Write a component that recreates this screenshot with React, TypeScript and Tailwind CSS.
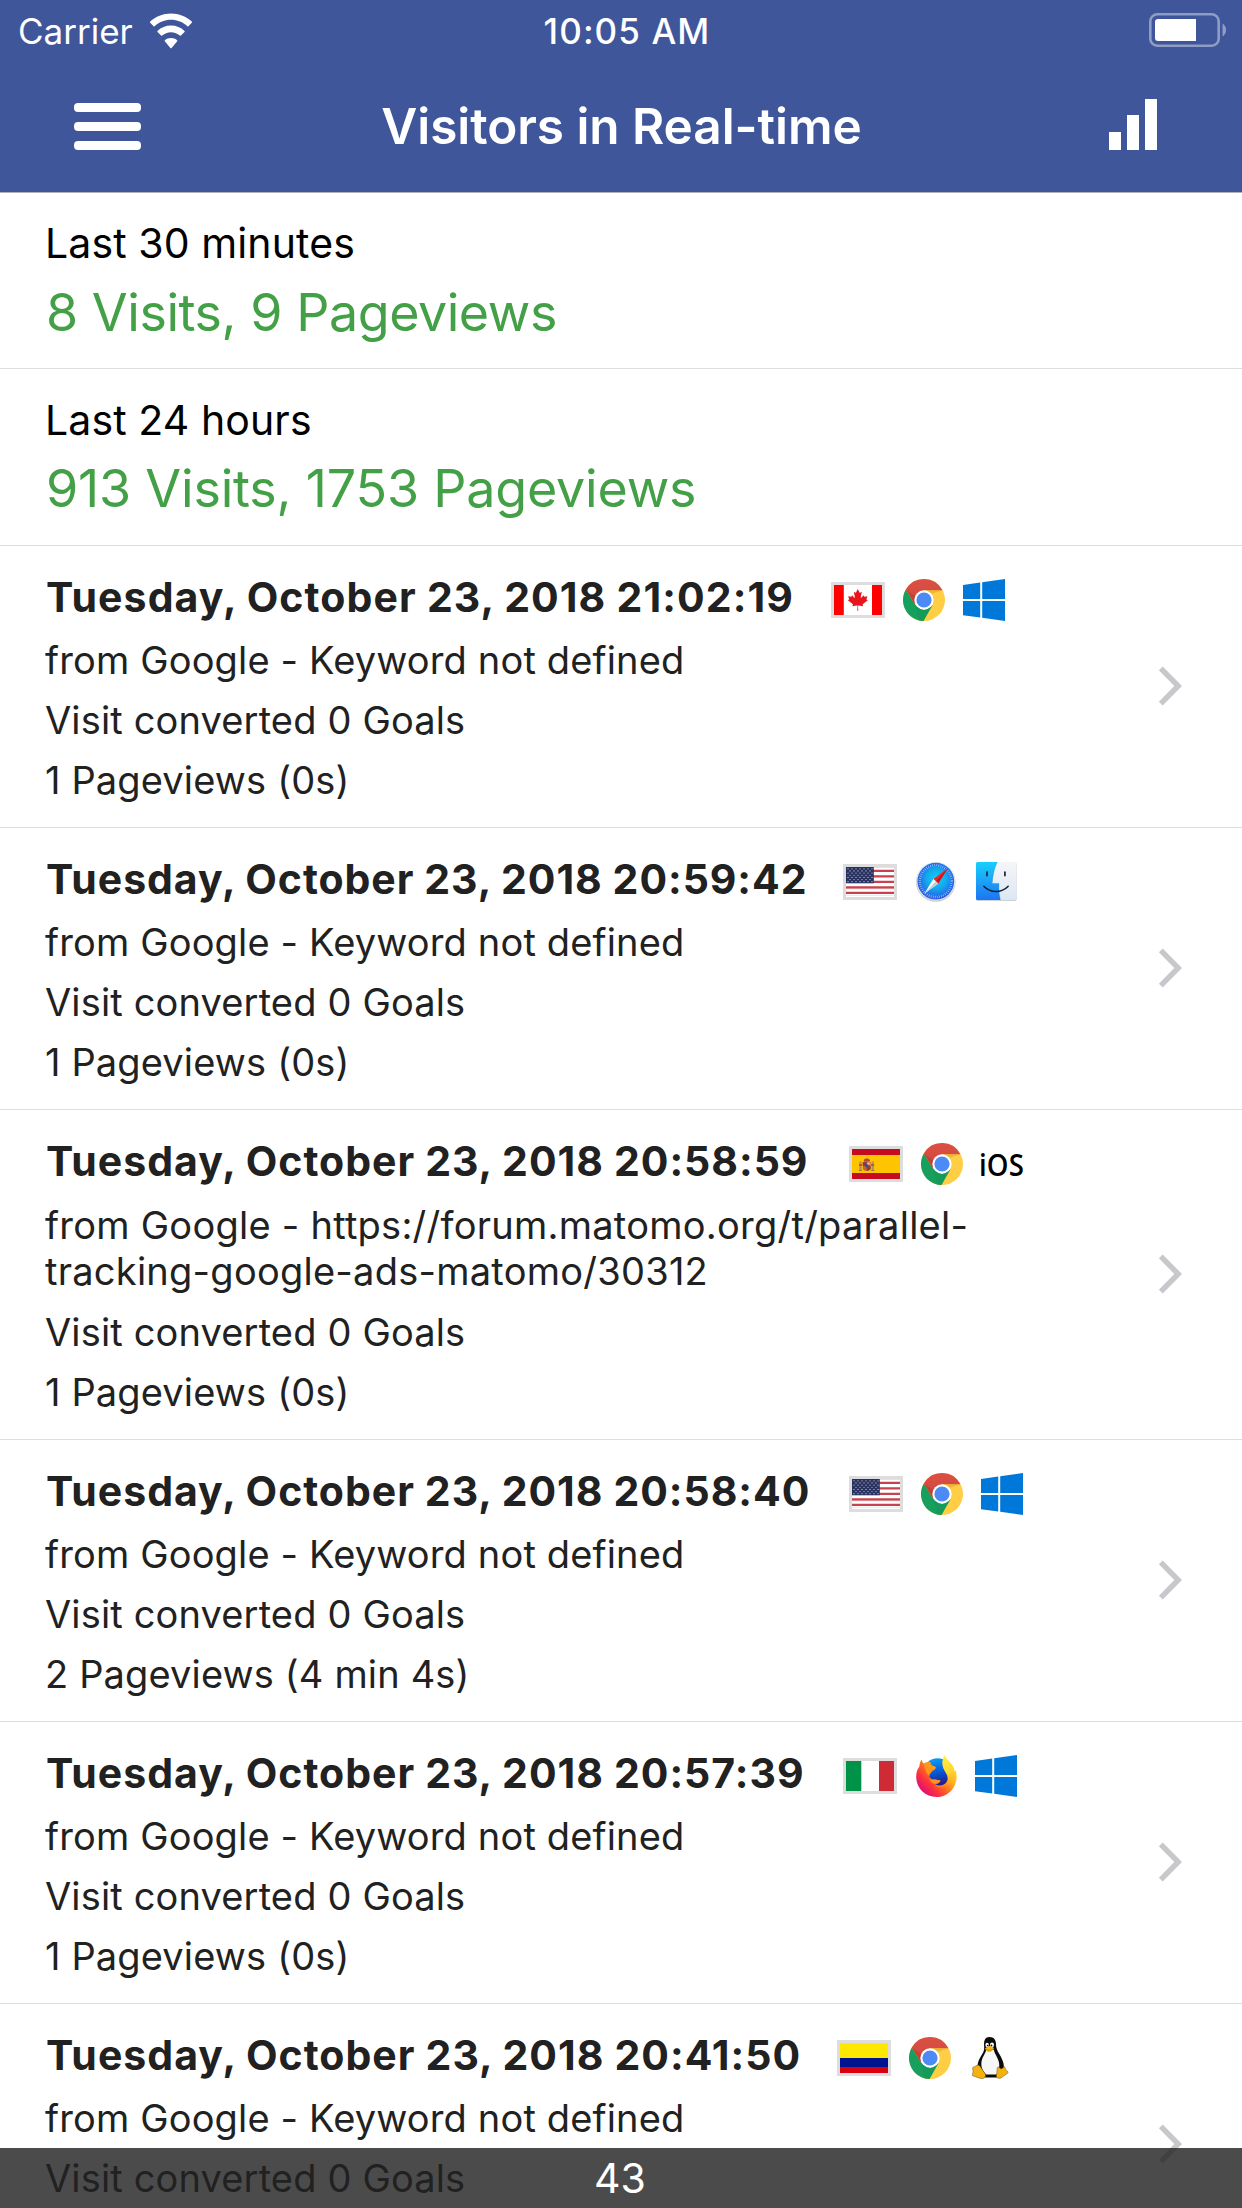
import type { ReactNode } from "react";

function Chrome() {
  return (
    <svg viewBox="0 0 42 42" className="size-[42px]">
      <defs>
        <linearGradient id="chromeRed" x1="0" y1="0" x2="0" y2="1">
          <stop offset="0" stopColor="#dc5044" />
          <stop offset="1" stopColor="#cf473b" />
        </linearGradient>
      </defs>
      <circle cx="21" cy="21" r="21" fill="#ffce44" />
      <path d="M2.8 10.5 12.3 26 21 31 29.7 26 20.5 42A21 21 0 0 1 2.8 10.5Z" fill="#17a05d" />
      <path d="M12.3 26 21 31 27 29 20.5 42 16 41.4Z" fill="#129254" opacity=".45" />
      <path d="M2.8 10.5A21 21 0 0 1 39.5 11.3L21 11.3 21 21 12.3 26Z" fill="url(#chromeRed)" />
      <path d="M21 11.3H39.4L28.5 15Z" fill="#dba52e" opacity=".55" />
      <path d="M2.8 10.5 12.3 26 12 17Z" fill="#a83a30" opacity=".45" />
      <circle cx="21" cy="21" r="9.7" fill="#fff" />
      <circle cx="21" cy="21" r="7.6" fill="#4c8bf5" />
    </svg>
  );
}

function Windows() {
  return (
    <svg viewBox="0 0 42 42" className="size-[42px]" fill="#0078d9">
      <path d="M0 6 17.2 3.6V20H0ZM19.2 3.3 42 0V20H19.2ZM0 22H17.2V38.5L0 36.2ZM19.2 22H42V42L19.2 38.8Z" />
    </svg>
  );
}

function Safari() {
  return (
    <svg viewBox="0 0 42 42" className="size-[42px]">
      <defs>
        <linearGradient id="safariFace" x1="0" y1="0" x2="0" y2="1">
          <stop offset="0" stopColor="#1f74ee" />
          <stop offset="1" stopColor="#2c5fe0" />
        </linearGradient>
        <radialGradient id="safariGlow" cx=".52" cy=".42" r=".5">
          <stop offset="0" stopColor="#15d2f2" />
          <stop offset=".65" stopColor="#12a9ee" />
          <stop offset="1" stopColor="#1f7cec" />
        </radialGradient>
      </defs>
      <circle cx="20.8" cy="21" r="19.8" fill="#c9cbd2" />
      <circle cx="20.8" cy="20.2" r="19.3" fill="#e9edf5" />
      <circle cx="20.8" cy="20.2" r="18.4" fill="url(#safariFace)" />
      <circle cx="20.8" cy="20.2" r="15.4" fill="url(#safariGlow)" />
      <circle cx="20.8" cy="20.2" r="16" fill="none" stroke="#fff" strokeOpacity=".6" strokeWidth="2.2" strokeDasharray=".7 1.4" />
      <path d="M32.8 7.2 23.2 22.4 18.4 17.9Z" fill="#f2262a" />
      <path d="M32.8 7.2 23.2 22.4 20.8 20.2Z" fill="#c9141c" />
      <path d="M9.2 32.8 18.4 17.9 23.2 22.4Z" fill="#fff" />
      <path d="M9.2 32.8 20.8 20.2 23.2 22.4Z" fill="#c3ccd6" />
    </svg>
  );
}

function Finder() {
  return (
    <svg viewBox="0 0 42 42" className="size-[42px]">
      <defs>
        <linearGradient id="finderBlue" x1="0" y1="0" x2="0" y2="1">
          <stop offset="0" stopColor="#17d0fd" />
          <stop offset="1" stopColor="#1e74f2" />
        </linearGradient>
        <linearGradient id="finderLight" x1="0" y1="0" x2="0" y2="1">
          <stop offset="0" stopColor="#f6f6f8" />
          <stop offset="1" stopColor="#dce7f4" />
        </linearGradient>
      </defs>
      <rect x="1" y="1.5" width="40.5" height="38.3" rx="1.5" fill="#b9c2cd" />
      <rect x="1" y="1" width="40.5" height="38" rx="1.5" fill="url(#finderLight)" />
      <path d="M2.5 1H22.3C19.4 7 17.8 14 17.2 22.5H24C23.6 28 24.2 34 25.4 39H2.5A1.5 1.5 0 0 1 1 37.5V2.5A1.5 1.5 0 0 1 2.5 1Z" fill="url(#finderBlue)" />
      <path d="M22.3 1C19.4 7 17.8 14 17.2 22.5H24C23.6 28 24.2 34 25.4 39" fill="none" stroke="#14508f" strokeOpacity=".35" strokeWidth=".6" />
      <path d="M12 11V14.6M29.9 11V14.6" stroke="#12263f" strokeWidth="1.7" strokeLinecap="round" />
      <path d="M8.8 25.2C15.5 32.2 26.5 32.2 33.2 25.2" fill="none" stroke="#14202f" strokeWidth="1.5" strokeLinecap="round" />
    </svg>
  );
}

function Ios() {
  return (
    <svg viewBox="0 0 42 42" className="size-[42px] overflow-visible">
      <text x="-2" y="32.500" textLength="45" lengthAdjust="spacingAndGlyphs" className="fill-black font-['Open_Sans',sans-serif] text-[30px] font-semibold">
        iOS
      </text>
    </svg>
  );
}

function Firefox() {
  return (
    <svg viewBox="0 0 42 42" className="size-[42px]">
      <defs>
        <linearGradient id="foxBody" x1=".85" y1=".1" x2=".15" y2=".8">
          <stop offset="0" stopColor="#ffe83a" />
          <stop offset=".35" stopColor="#ffb41f" />
          <stop offset=".6" stopColor="#ff6a22" />
          <stop offset=".82" stopColor="#fb2f3f" />
          <stop offset="1" stopColor="#e5146e" />
        </linearGradient>
        <linearGradient id="foxGlobe" x1=".4" y1="0" x2=".6" y2="1">
          <stop offset="0" stopColor="#0aa0f6" />
          <stop offset=".5" stopColor="#0758d6" />
          <stop offset="1" stopColor="#2b0f7d" />
        </linearGradient>
        <linearGradient id="foxTail" x1=".3" y1="0" x2=".6" y2="1">
          <stop offset="0" stopColor="#fff24a" />
          <stop offset=".6" stopColor="#ffd62c" />
          <stop offset="1" stopColor="#ffa01e" stopOpacity="0" />
        </linearGradient>
      </defs>
      <circle cx="22.5" cy="17.5" r="14.2" fill="url(#foxGlobe)" />
      <path d="M6.6 4.6C6.9 6.6 7.8 7.8 8.8 8.6 11 7.3 13.3 7 15.6 7.6 15.4 9.7 16.6 10.8 19 11.2L20.8 12.2C20.5 14.2 19 15.2 17.4 15.6 16.8 17.4 14.4 18.6 14.2 21 15.4 25.8 18.6 24 21.2 24.8 23.8 25.6 25.2 24.6 25.4 26 24 28.4 21.6 29.2 18.8 28.8 23.8 32 30.4 30.8 32.4 25.4 33.8 20.8 31 18.6 28.8 14 26.6 9.4 27.4 4.6 29.6.4 31.4 5 36.6 7.8 38.4 12.4 39.2 13.6 39.4 15 39.4 16.2L40.8 15.6C42.6 21.6 41.4 28 38.6 32.4 34.4 38.8 28.4 42 21.6 42 9.8 41.8 1.2 33 1.2 21.6 1.2 17.4 2.2 14.2 4.4 11.4 4.6 9 5.2 6.6 6.6 4.6Z" fill="url(#foxBody)" />
      <path d="M29.6.4C31.4 5 36.6 7.8 38.4 12.4 40.6 18.4 39.4 27 33.6 31.4 28 35 22 33 18.8 28.8 23.8 32 30.4 30.8 32.4 25.4 33.8 20.8 31 18.6 28.8 14 26.6 9.4 27.4 4.6 29.6.4Z" fill="url(#foxTail)" />
      <path d="M8.8 8.6C11 7.3 13.3 7 15.6 7.6 15.4 9.7 16.6 10.8 19 11.2L20.8 12.2C20.5 14.2 19 15.2 17.4 15.6 16.8 17.4 14.4 18.6 14.2 21 11 19 9.4 13.4 8.8 8.6ZM14.2 21C15.4 25.8 18.6 24 21.2 24.8 23.8 25.6 25.2 24.6 25.4 26 24 28.4 21.6 29.2 18.8 28.8 16 27.6 14.4 24.4 14.2 21Z" fill="#ff9a1c" opacity=".85" />
    </svg>
  );
}

function Tux() {
  return (
    <svg viewBox="0 0 42 42" className="size-[42px]">
      <path d="M20.6 0C24.8 0 27 2.8 27 7 27 12 29 14.4 31.2 18.6 33.4 22.8 35.6 27 34.6 32L28 40.4H15L9.4 33C7.6 29 9 24.6 11.2 20.6 13.2 16.6 15.4 14.6 15.2 10.4 14.8 4.6 15.2 0 20.6 0Z" fill="#0b0b0c" />
      <path d="M17.4 12.6C16.6 16.4 13.6 19.6 12.6 24 11.8 28.4 12.8 31 14.2 34L17 37.4H27.6C29.6 34.4 30.6 31 30.2 27 29.8 21.6 26 18 24.8 12.8Z" fill="#f7f7f7" />
      <ellipse cx="18.1" cy="8" rx="1.7" ry="2.3" fill="#fff" />
      <ellipse cx="23" cy="8" rx="2" ry="2.4" fill="#fff" />
      <circle cx="18.6" cy="8.5" r=".85" fill="#111" />
      <circle cx="22.5" cy="8.5" r=".9" fill="#111" />
      <path d="M16.2 11.4C17.6 9.8 19.4 8.8 20.8 9 22.6 9.2 24 10.2 25 11 24.4 13.2 22.2 15 20.2 15 18.2 14.8 16.6 13.4 16.2 11.4Z" fill="#f5b912" />
      <path d="M16.6 12C18.6 13.6 22 13.6 24.7 11.8" fill="none" stroke="#a36a08" strokeWidth=".6" />
      <path d="M4.2 30C6.2 30 7.4 27.8 9.6 28.2 12 29.4 13.4 33.4 16 36.4 17.4 39 16 41.4 13 41.6 10 41.4 7 39.6 3.6 38.8 2.8 37 4.6 35.6 4 33.4 3.6 32 3.4 30.8 4.2 30Z" fill="#f3b20f" stroke="#6e4b05" strokeWidth=".5" />
      <path d="M28.2 32C28 30 29.4 29 30.6 31 32 32.6 34 31.4 35.4 29.6 36.6 31.6 36.4 33.2 38.8 34.6 40 36.4 36 37.8 33.6 39.8 31.6 41.8 28.4 42 27.4 39.6 27.2 37 28.4 34.6 28.2 32Z" fill="#f3b20f" stroke="#6e4b05" strokeWidth=".5" />
    </svg>
  );
}

const LEAF =
  "m-90 2030 45-863a95 95 0 0 0-111-98l-859 151 116-320a65 65 0 0 0-20-73l-941-762 212-99a65 65 0 0 0 34-79l-186-572 542 115a65 65 0 0 0 73-38l105-247 423 454a65 65 0 0 0 111-57l-204-1052 327 189a65 65 0 0 0 91-27l332-652 332 652a65 65 0 0 0 91 27l327-189-204 1052a65 65 0 0 0 111 57l423-454 105 247a65 65 0 0 0 73 38l542-115-186 572a65 65 0 0 0 34 79l212 99-941 762a65 65 0 0 0-20 73l116 320-859-151a95 95 0 0 0-111 98l45 863z";

function Flag({ children }: { children: ReactNode }) {
  return (
    <span className="box-border block h-9 w-[54px] border-[3px] border-[#dddddd]">
      <svg viewBox="0 0 48 30" className="block h-[30px] w-12">
        {children}
      </svg>
    </span>
  );
}

function Canada() {
  return (
    <Flag>
      <path fill="#fff" d="M0 0h48v30H0z" />
      <path fill="#ff0000" d="M0 0h9.8v30H0zM38 0h10v30H38z" />
      <path d={LEAF} fill="#e8161c" transform="translate(23.8 14.8) scale(.00535)" />
    </Flag>
  );
}

function Usa() {
  const stars: ReactNode[] = [];
  for (let r = 0; r < 7; r++)
    for (let c = 0; c < (r % 2 ? 6 : 7); c++)
      stars.push(<circle key={`${r}-${c}`} cx={2 + c * 4 + (r % 2 ? 2 : 0)} cy={1.8 + r * 2.15} r=".62" fill="#c3c9dc" />);
  return (
    <Flag>
      <path fill="#fff" d="M0 0h48v30H0z" />
      <path fill="#c8414e" d="M0 2.7h48v2.3H0zM0 8.2h48v2.3H0zM0 13.7h48v2.3H0zM0 19.2h48v2.5H0zM0 24.8h48v2.3H0z" />
      <path fill="#f1cfd2" d="M0 0h48v.8H0zM0 21.7h48v.6H0zM0 28.2h48v.6H0z" />
      <path fill="#28315f" d="M0 0h27.8v16.3H0z" />
      {stars}
    </Flag>
  );
}

function Spain() {
  return (
    <Flag>
      <path fill="#c60b1e" d="M0 0h48v30H0z" />
      <path fill="#ffc400" d="M0 6h48v18H0z" />
      <path fill="#b98a5a" d="M7.4 12.5h2.2v9H7.4zM19.6 12.5h2.2v9h-2.2z" />
      <path fill="#b5463a" d="M7 15.2h3.2v1.6H7zM19 15.2h3.2v1.6H19zM11.6 11.2c.8-2.4 5.6-2.4 6.4 0l-.6 1.6h-5.2z" />
      <path fill="#c9612f" d="M10.8 13h7.8v6.2c0 3.6-7.8 3.6-7.8 0z" />
      <path fill="#8a3d46" d="M10.8 13h3.9v4h-3.9zM14.7 17h3.9v2.6c0 1.2-1.8 2-3.9 2.2z" />
      <circle cx="14.7" cy="16.6" r="1.6" fill="#2f4f94" />
      <path fill="#d6c9b8" d="M15.4 13.4h2.4v2.2h-2.4z" />
      <path fill="#8d7b4d" d="M6.8 21h3.2v1H6.8zM19.2 21h3.2v1h-3.2z" />
    </Flag>
  );
}

function Italy() {
  return (
    <Flag>
      <path fill="#fff" d="M0 0h48v30H0z" />
      <path fill="#009246" d="M0 0h15.3v30H0z" />
      <path fill="#ce2b37" d="M33 0h15v30H33z" />
    </Flag>
  );
}

function Colombia() {
  return (
    <Flag>
      <path fill="#ffe800" d="M0 0h48v15H0z" />
      <path fill="#00148e" d="M0 15h48v9H0z" />
      <path fill="#da0010" d="M0 24h48v6H0z" />
    </Flag>
  );
}

type Visit = {
  date: string;
  titleClass: string;
  from: string[];
  pageviews?: string;
  icons: ReactNode;
};

const KEYWORD = ["from Google - Keyword not defined"];

const visits: Visit[] = [
  { date: "Tuesday, October 23, 2018 21:02:19", titleClass: "w-[785px] tracking-[1.1px]", from: KEYWORD, pageviews: "1 Pageviews (0s)", icons: <><Canada /><Chrome /><Windows /></> },
  { date: "Tuesday, October 23, 2018 20:59:42", titleClass: "w-[797px] tracking-[0.95px]", from: KEYWORD, pageviews: "1 Pageviews (0s)", icons: <><Usa /><Safari /><Finder /></> },
  { date: "Tuesday, October 23, 2018 20:58:59", titleClass: "w-[803px] tracking-[1px]", from: ["from Google - https://forum.matomo.org/t/parallel-", "tracking-google-ads-matomo/30312"], pageviews: "1 Pageviews (0s)", icons: <><Spain /><Chrome /><Ios /></> },
  { date: "Tuesday, October 23, 2018 20:58:40", titleClass: "w-[803px] tracking-[0.98px]", from: KEYWORD, pageviews: "2 Pageviews (4 min 4s)", icons: <><Usa /><Chrome /><Windows /></> },
  { date: "Tuesday, October 23, 2018 20:57:39", titleClass: "w-[797px] tracking-[1px]", from: KEYWORD, pageviews: "1 Pageviews (0s)", icons: <><Italy /><Firefox /><Windows /></> },
  { date: "Tuesday, October 23, 2018 20:41:50", titleClass: "w-[791px] tracking-[1.02px]", from: KEYWORD, icons: <><Colombia /><Chrome /><Tux /></> },
];

function VisitRow({ v }: { v: Visit }) {
  const wrapped = v.from.length > 1;
  return (
    <li className="flex items-center justify-between border-b border-[#dddddd] pt-[26px] pr-[58px] pb-6 pl-[45px] text-[38px] leading-[46px] tracking-[0.15px] whitespace-nowrap text-[#212121]">
      <div>
        <div className="flex h-[50px] items-center pl-px">
          <h2 className={`${v.titleClass} text-[41px] leading-[50px] font-bold [word-spacing:-0.7px]`}>{v.date}</h2>
          <div className="mt-1.5 flex items-center gap-[18px]">{v.icons}</div>
        </div>
        <div className={wrapped ? "mt-4 mb-[15px] tracking-[0.25px]" : "mt-[15px] mb-3.5"}>
          {v.from.map((line) => (
            <p key={line}>{line}</p>
          ))}
        </div>
        <p>Visit converted 0 Goals</p>
        <p className="mt-3.5 h-[46px]">{v.pageviews}</p>
      </div>
      <svg viewBox="0 0 26 40" className="mb-1 h-10 w-[26px]" fill="none" stroke="#c7c7cc" strokeWidth="5.4">
        <path d="M2.8 2.4 20.2 20 2.8 37.6" />
      </svg>
    </li>
  );
}

function Summary({ label, value, className, valueClass }: { label: string; value: string; className: string; valueClass: string }) {
  return (
    <section className={`${className} border-b border-[#dddddd] pl-[45px]`}>
      <p className="text-[41px] leading-[50px] tracking-[0.1px] text-black">{label}</p>
      <p className={`${valueClass} pl-px text-[52px] leading-[64px] text-[#43a047]`}>{value}</p>
    </section>
  );
}

export default function App() {
  return (
    <div className="relative h-[2208px] w-[1242px] overflow-hidden bg-white font-['Inter',sans-serif]">
      <header className="h-[193px] border-b border-[#b2b2b2] bg-[#3f569b] text-white">
        <div className="grid h-[62px] grid-cols-3 items-center pr-[15px] pl-[18px] text-[35px] leading-[62px]">
          <div className="flex items-center">
            <span>Carrier</span>
            <svg viewBox="0 0 42 36" className="ml-[17px] h-9 w-[42px]" fill="#fff">
              <path d="M21 .4C29 .4 36.400 3.400 41.800 8.600 42.100 8.900 42.100 9.400 41.800 9.700L38.400 13.200C38.100 13.500 37.700 13.500 37.400 13.200 33 9 27.200 6.800 21 6.800S9 9 4.600 13.200C4.300 13.500 3.900 13.500 3.600 13.200L.2 9.700C-.1 9.400-.1 8.900.2 8.600 5.600 3.400 13 .4 21 .4Z" />
              <path d="M21 12.600C26.200 12.600 31 14.600 34.500 17.900 34.900 18.200 34.900 18.700 34.500 19L30.900 22.600C30.600 22.900 30.100 22.900 29.800 22.600 27.500 20.500 24.400 19.200 21 19.200S14.500 20.500 12.200 22.600C11.900 22.900 11.400 22.900 11.100 22.600L7.500 19C7.100 18.700 7.100 18.200 7.500 17.900 11 14.600 15.800 12.600 21 12.600Z" />
              <path d="M21 25C23.400 25 25.500 25.800 27.200 27.200 27.500 27.500 27.500 28 27.200 28.300L21.600 35C21.300 35.400 20.700 35.400 20.400 35L14.800 28.300C14.500 28 14.500 27.500 14.800 27.200 16.500 25.800 18.600 25 21 25Z" />
            </svg>
          </div>
          <span className="pl-[9px] text-center font-medium tracking-[1.1px]">10:05 AM</span>
          <svg viewBox="0 0 78 34" className="mb-0.5 h-[34px] w-[78px] justify-self-end">
            <rect x="1.300" y="1.300" width="68.400" height="31.400" rx="7" fill="none" stroke="#fff" strokeOpacity=".42" strokeWidth="2.600" />
            <path d="M9 6H47V28H9A3 3 0 0 1 6 25V9A3 3 0 0 1 9 6Z" fill="#fff" />
            <path d="M73.500 10.500C78.200 13 78.200 21 73.500 23.500Z" fill="#fff" fillOpacity=".42" />
          </svg>
        </div>
        <div className="flex h-32 items-center justify-between pr-[85px] pl-[74px]">
          <div className="flex w-[67px] flex-col gap-2.5">
            <span className="h-[9px] rounded-[4px] bg-white" />
            <span className="h-[9px] rounded-[4px] bg-white" />
            <span className="h-[9px] rounded-[4px] bg-white" />
          </div>
          <h1 className="mb-px ml-[-7px] text-[49.500px] leading-[60px] font-semibold tracking-[-0.05px]">Visitors in Real-time</h1>
          <div className="mb-[3px] flex h-[51px] w-12 items-end gap-1.5">
            <span className="h-[18px] w-3 bg-white" />
            <span className="h-[35px] w-3 bg-white" />
            <span className="h-[51px] w-3 bg-white" />
          </div>
        </div>
      </header>

      <Summary label="Last 30 minutes" value="8 Visits, 9 Pageviews" className="h-44 pt-[25px]" valueClass="mt-[13px] tracking-[-0.46px]" />
      <Summary label="Last 24 hours" value="913 Visits, 1753 Pageviews" className="h-[177px] pt-[26px]" valueClass="mt-3 tracking-[-0.2px]" />

      <ul>
        {visits.map((v) => (
          <VisitRow key={v.date} v={v} />
        ))}
      </ul>

      <footer className="absolute inset-x-0 bottom-0 flex h-[60px] items-center justify-center bg-[#212121]/81 pr-0.5 text-[41px] leading-[60px] text-white">
        43
      </footer>
    </div>
  );
}
